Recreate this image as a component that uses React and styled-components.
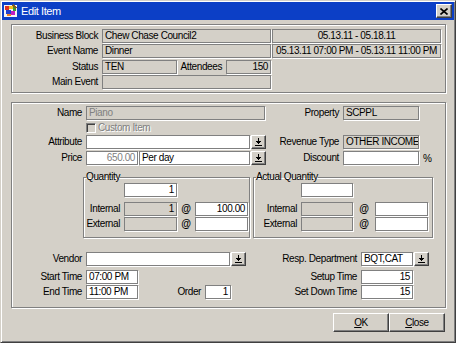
import React from "react";
import styled, { createGlobalStyle } from "styled-components";

const Global = createGlobalStyle`
  html, body {
    margin: 0;
    padding: 0;
    background: #d4d0c8;
  }
  body {
    font-family: "Liberation Sans", Arial, sans-serif;
    font-size: 10px;
    letter-spacing: -0.4px;
    color: #000;
  }
`;

const Window = styled.div`
  width: 456px;
  height: 343px;
  box-sizing: border-box;
  background: #d4d0c8;
  border: 1px solid;
  border-color: #d4d0c8 #404040 #404040 #d4d0c8;
  box-shadow: inset 1px 1px 0 #fff, inset -1px -1px 0 #808080;
  padding: 1px;
  display: flex;
  flex-direction: column;
`;

const TitleBar = styled.div`
  height: 18px;
  background: #0c3fc6;
  display: flex;
  align-items: center;
  padding: 0 2px 0 1px;
  color: #fff;
  font-size: 11px;
  letter-spacing: -0.4px;
`;

const TitleText = styled.span`
  flex: 1;
  margin-left: 2px;
`;

const CloseBox = styled.div`
  width: 16px;
  height: 14px;
  box-sizing: border-box;
  background: #d4d0c8;
  border: 1px solid;
  border-color: #fff #404040 #404040 #fff;
  box-shadow: inset -1px -1px 0 #808080;
  display: flex;
  align-items: center;
  justify-content: center;
`;

const Panel = styled.div`
  margin: ${(p) => p.$mt}px 8px 0 9px;
  height: ${(p) => p.$h}px;
  box-sizing: border-box;
  border: 1px solid #808080;
  box-shadow: inset 1px 1px 0 #fff, 1px 1px 0 #fff;
  padding-top: ${(p) => p.$pt}px;
  display: flex;
  flex-direction: column;
`;

const Row = styled.div`
  display: flex;
  align-items: center;
  height: ${(p) => p.$h ?? 14}px;
  margin-top: ${(p) => p.$mt ?? 0}px;
`;

const Label = styled.div`
  width: ${(p) => p.$w}px;
  flex: none;
  box-sizing: border-box;
  text-align: right;
  padding-right: ${(p) => p.$pr ?? 4}px;
  white-space: nowrap;
  line-height: 14px;
`;

const Field = styled.div`
  width: ${(p) => p.$w}px;
  height: 14px;
  flex: none;
  box-sizing: border-box;
  margin-left: ${(p) => p.$ml ?? 0}px;
  border: 1px solid #808080;
  box-shadow: 1px 1px 0 #fff;
  background: ${(p) => (p.$ro ? "#d4d0c8" : "#fff")};
  color: ${(p) => (p.$dim ? "#808080" : "#000")};
  text-align: ${(p) => p.$align ?? "left"};
  padding: 0 2px;
  line-height: 12px;
  white-space: nowrap;
  overflow: hidden;
`;

const DropButton = styled.div`
  width: 15px;
  height: 14px;
  flex: none;
  box-sizing: border-box;
  margin-left: 1px;
  background: #d4d0c8;
  border: 1px solid;
  border-color: #fff #404040 #404040 #fff;
  box-shadow: inset -1px -1px 0 #808080;
  display: flex;
  align-items: center;
  justify-content: center;
`;

const Check = styled.div`
  width: 10px;
  height: 10px;
  box-sizing: border-box;
  border: 1px solid;
  border-color: #808080 #fff #fff #808080;
  box-shadow: inset 1px 1px 0 #404040;
  background: #d4d0c8;
  margin-left: 74px;
`;

const Disabled = styled.span`
  color: #808080;
  text-shadow: 1px 1px 0 #fff;
  margin-left: 2px;
`;

const Unit = styled.span`
  margin-left: 4px;
`;

const GroupRow = styled.div`
  display: flex;
  margin-top: 6px;
  padding-left: 71px;
  gap: 3px;
`;

const Group = styled.fieldset`
  margin: 0;
  padding: 0 0 6px 0;
  width: ${(p) => p.$w}px;
  box-sizing: border-box;
  border: 1px solid #808080;
  box-shadow: inset 1px 1px 0 #fff, 1px 1px 0 #fff;
  min-inline-size: 0;
`;

const Legend = styled.legend`
  padding: 0;
  margin-left: 2px;
  line-height: 12px;
  font-size: 10px;
`;

const At = styled.div`
  width: ${(p) => p.$w}px;
  flex: none;
  text-align: center;
  font-weight: bold;
  font-size: 10px;
  line-height: 14px;
`;

const Footer = styled.div`
  display: flex;
  justify-content: flex-end;
  padding-right: 9px;
  margin-top: 5px;
`;

const Button = styled.div`
  width: 56px;
  height: 19px;
  box-sizing: border-box;
  border: 1px solid;
  border-color: #fff #404040 #404040 #fff;
  box-shadow: inset -1px -1px 0 #808080;
  display: flex;
  align-items: center;
  justify-content: center;
  u {
    text-decoration: underline;
  }
`;

const DropIcon = () => (
  <svg width="7" height="8" viewBox="0 0 7 8" shapeRendering="crispEdges">
    <rect x="3" y="0" width="1" height="3" fill="#000" />
    <rect x="1" y="3" width="5" height="1" fill="#000" />
    <rect x="2" y="4" width="3" height="1" fill="#000" />
    <rect x="3" y="5" width="1" height="1" fill="#000" />
    <rect x="0" y="7" width="7" height="1" fill="#000" />
  </svg>
);

const AppIcon = () => (
  <svg width="16" height="16" viewBox="0 0 16 16" shapeRendering="crispEdges">
    <rect x="1" y="2" width="13" height="12" fill="#f4f4f4" />
    <rect x="2" y="3" width="4" height="4" fill="#e03020" />
    <rect x="6" y="3" width="4" height="3" fill="#f0c020" />
    <rect x="10" y="4" width="3" height="4" fill="#30a030" />
    <rect x="3" y="7" width="5" height="4" fill="#2040d0" />
    <rect x="8" y="8" width="4" height="4" fill="#c020c0" />
    <rect x="4" y="11" width="4" height="2" fill="#f08020" />
    <path d="M10 1 L14 5 L12 6 L9 2 Z" fill="#806020" />
  </svg>
);

const CloseIcon = () => (
  <svg width="8" height="7" viewBox="0 0 8 7">
    <path d="M0.5 0.5 L7.5 6.5 M7.5 0.5 L0.5 6.5" stroke="#000" strokeWidth="1.6" />
  </svg>
);

export default function App() {
  return (
    <>
      <Global />
      <Window>
        <TitleBar>
          <AppIcon />
          <TitleText>Edit Item</TitleText>
          <CloseBox>
            <CloseIcon />
          </CloseBox>
        </TitleBar>

        <Panel $mt={4} $h={69} $pt={4}>
          <Row>
            <Label $w={90}>Business Block</Label>
            <Field $w={169} $ro>Chew Chase Council2</Field>
            <Field $w={169} $ml={1} $ro $align="center">05.13.11 - 05.18.11</Field>
          </Row>
          <Row $mt={1}>
            <Label $w={90}>Event Name</Label>
            <Field $w={169} $ro>Dinner</Field>
            <Field $w={169} $ml={1} $ro $align="center">
              05.13.11 07:00 PM - 05.13.11 11:00 PM
            </Field>
          </Row>
          <Row $mt={2}>
            <Label $w={90}>Status</Label>
            <Field $w={75} $ro>TEN</Field>
            <Label $w={49}>Attendees</Label>
            <Field $w={45} $ro $align="right">150</Field>
          </Row>
          <Row $mt={1}>
            <Label $w={90}>Main Event</Label>
            <Field $w={169} $ro />
          </Row>
        </Panel>

        <Panel $mt={9} $h={206} $pt={3}>
          <Row>
            <Label $w={74}>Name</Label>
            <Field $w={179} $ro $dim>Piano</Field>
            <Label $w={78}>Property</Label>
            <Field $w={76} $ro>SCPPL</Field>
          </Row>
          <Row $mt={2} $h={11}>
            <Check />
            <Disabled>Custom Item</Disabled>
          </Row>
          <Row $mt={2}>
            <Label $w={74}>Attribute</Label>
            <Field $w={164} />
            <DropButton>
              <DropIcon />
            </DropButton>
            <Label $w={77}>Revenue Type</Label>
            <Field $w={76} $ro>OTHER INCOME</Field>
          </Row>
          <Row $mt={2}>
            <Label $w={74}>Price</Label>
            <Field $w={52} $align="right" $dim>650.00</Field>
            <Field $w={111} $ml={1}>Per day</Field>
            <DropButton>
              <DropIcon />
            </DropButton>
            <Label $w={77}>Discount</Label>
            <Field $w={76} />
            <Unit>%</Unit>
          </Row>

          <GroupRow>
            <Group $w={167}>
              <Legend>Quantity</Legend>
              <Row>
                <Label $w={40} />
                <Field $w={53} $align="right">1</Field>
              </Row>
              <Row $mt={5}>
                <Label $w={40}>Internal</Label>
                <Field $w={53} $ro $align="right">1</Field>
                <At $w={18}>@</At>
                <Field $w={53} $align="right">100.00</Field>
              </Row>
              <Row $mt={1}>
                <Label $w={40}>External</Label>
                <Field $w={53} $ro />
                <At $w={18}>@</At>
                <Field $w={53} />
              </Row>
            </Group>
            <Group $w={180}>
              <Legend>Actual Quantity</Legend>
              <Row>
                <Label $w={47} />
                <Field $w={52} />
              </Row>
              <Row $mt={5}>
                <Label $w={47}>Internal</Label>
                <Field $w={52} $ro />
                <At $w={22}>@</At>
                <Field $w={53} />
              </Row>
              <Row $mt={1}>
                <Label $w={47}>External</Label>
                <Field $w={52} $ro />
                <At $w={22}>@</At>
                <Field $w={53} />
              </Row>
            </Group>
          </GroupRow>

          <Row $mt={14}>
            <Label $w={74}>Vendor</Label>
            <Field $w={144} />
            <DropButton>
              <DropIcon />
            </DropButton>
            <Label $w={115}>Resp. Department</Label>
            <Field $w={52}>BQT,CAT</Field>
            <DropButton>
              <DropIcon />
            </DropButton>
          </Row>
          <Row $mt={4}>
            <Label $w={74}>Start Time</Label>
            <Field $w={52}>07:00 PM</Field>
            <Label $w={223}>Setup Time</Label>
            <Field $w={52} $align="right">15</Field>
          </Row>
          <Row $mt={1}>
            <Label $w={74}>End Time</Label>
            <Field $w={52}>11:00 PM</Field>
            <Label $w={67}>Order</Label>
            <Field $w={26} $align="right">1</Field>
            <Label $w={130}>Set Down Time</Label>
            <Field $w={52} $align="right">15</Field>
          </Row>
        </Panel>

        <Footer>
          <Button>
            <u>O</u>K
          </Button>
          <Button>
            <u>C</u>lose
          </Button>
        </Footer>
      </Window>
    </>
  );
}
